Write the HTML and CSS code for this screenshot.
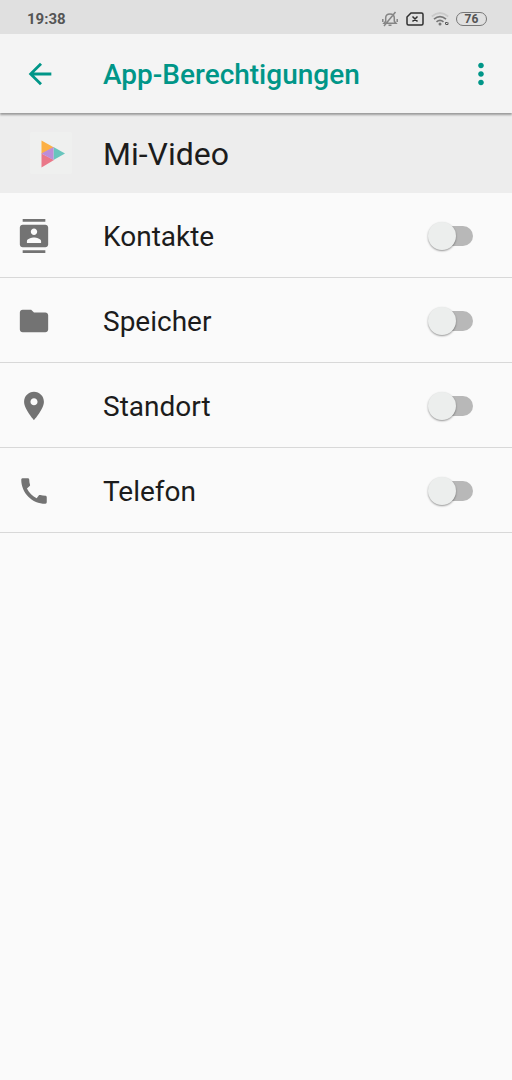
FILE: index.html
```html
<!DOCTYPE html>
<html lang="de">
<head>
  <meta charset="UTF-8">
  <meta name="viewport" content="width=device-width, initial-scale=1.0">
  <title>App-Berechtigungen</title>
  <link rel="stylesheet" href="styles.css">
</head>
<body>
  <!-- Status bar -->
  <div class="status-bar">
    <span class="time">19:38</span>
    <div class="status-icons">
      <svg width="18" height="16" viewBox="0 0 18 16" fill="none" stroke="#858585" stroke-width="1.5">
        <path d="M3 12.200l1.700-2V7c0-2.500 1.800-4 4.300-4s4.300 1.500 4.300 4v3.200l1.700 2zM7.500 14.200h3M14.500 1L3 15M1.800 8v3M16.200 8v3" />
      </svg>
      <svg width="18" height="14" viewBox="0 0 18 14" fill="none" stroke="#2f2f2f" stroke-width="1.5">
        <path d="M5 1h10.500q1.500 0 1.500 1.500v9q0 1.500-1.500 1.500h-13Q1 13 1 11.500V5zM6.500 4.500l5 5M11.500 4.500l-5 5" />
      </svg>
      <svg width="18" height="14" viewBox="0 0 18 14" fill="none" stroke-width="1.7">
        <path stroke="#cacaca" d="M.8 4.500Q9-2.500 17.200 4.500" />
        <path stroke="#777" d="M3 7.200Q9 2 15 7.200M5.500 9.800Q9 7 12.500 9.800" />
        <circle cx="9" cy="12" r="1.500" fill="#777" />
        <path stroke="#555" stroke-width="1" d="M14.500 12.500v-2h2M17 10.500v2h-2" />
      </svg>
      <span class="battery">76</span>
    </div>
  </div>

  <!-- Toolbar -->
  <header class="toolbar">
    <button class="icon-button" type="button" aria-label="Zurück">
      <svg viewBox="0 0 24 24"><path d="M20 11H7.830l5.590-5.590L12 4l-8 8 8 8 1.410-1.410L7.830 13H20v-2z" /></svg>
    </button>
    <h1>App-Berechtigungen</h1>
    <button class="icon-button" type="button" aria-label="Mehr">
      <svg viewBox="0 0 24 24"><path d="M12 8c1.100 0 2-.9 2-2s-.9-2-2-2-2 .9-2 2 .9 2 2 2zm0 2c-1.100 0-2 .9-2 2s.9 2 2 2 2-.9 2-2-.9-2-2-2zm0 6c-1.100 0-2 .9-2 2s.9 2 2 2 2-.9 2-2-.9-2-2-2z" /></svg>
    </button>
  </header>

  <main>
    <!-- App name -->
    <div class="app">
      <svg class="app-logo" viewBox="0 0 42 42">
        <path fill="#fcb045" d="M11.500 8.500L24 15.500 11.500 22z" />
        <path fill="#68c5bd" d="M23.500 15L35 21.500 23.500 28z" />
        <path fill="#ea7889" d="M11.500 21.500L24 28 11.500 35.500z" />
        <path fill="#bd8dd8" d="M23.500 15v13l-12-6.500z" />
      </svg>
      <h2>Mi-Video</h2>
    </div>

    <!-- Permissions -->
    <ul class="permissions">
      <li>
        <svg class="permission-icon" viewBox="0 0 24 24"><path d="M20 0H4v2h16V0zM4 24h16v-2H4v2zM20 4H4c-1.100 0-2 .9-2 2v12c0 1.100.9 2 2 2h16c1.100 0 2-.9 2-2V6c0-1.100-.9-2-2-2zm-8 2.750c1.240 0 2.250 1.010 2.250 2.250s-1.010 2.250-2.250 2.250S9.750 10.240 9.750 9 10.760 6.750 12 6.750zM17 17H7v-1.500c0-1.670 3.330-2.500 5-2.500s5 .83 5 2.500V17z" /></svg>
        <label for="contacts">Kontakte</label>
        <input type="checkbox" role="switch" id="contacts" class="switch">
      </li>
      <li>
        <svg class="permission-icon" viewBox="0 0 24 24"><path d="M10 4H4c-1.100 0-1.990.9-1.990 2L2 18c0 1.100.9 2 2 2h16c1.100 0 2-.9 2-2V8c0-1.100-.9-2-2-2h-8l-2-2z" /></svg>
        <label for="storage">Speicher</label>
        <input type="checkbox" role="switch" id="storage" class="switch">
      </li>
      <li>
        <svg class="permission-icon" viewBox="0 0 24 24"><path d="M12 2C8.130 2 5 5.130 5 9c0 5.250 7 13 7 13s7-7.750 7-13c0-3.870-3.130-7-7-7zm0 9.500c-1.380 0-2.500-1.120-2.500-2.500s1.120-2.500 2.500-2.500 2.500 1.120 2.500 2.500-1.120 2.500-2.500 2.500z" /></svg>
        <label for="location">Standort</label>
        <input type="checkbox" role="switch" id="location" class="switch">
      </li>
      <li>
        <svg class="permission-icon" viewBox="0 0 24 24"><path d="M20.010 15.380c-1.230 0-2.420-.2-3.530-.56-.35-.12-.74-.03-1.010.24l-1.570 1.970c-2.830-1.350-5.480-3.900-6.890-6.830l1.950-1.660c.27-.28.35-.67.24-1.020-.37-1.110-.56-2.300-.56-3.530 0-.54-.45-.99-.99-.99H4.190C3.650 3 3 3.240 3 3.990 3 13.280 10.730 21 20.010 21c.71 0 .99-.63.99-1.180v-3.450c0-.54-.45-.99-.99-.99z" /></svg>
        <label for="phone">Telefon</label>
        <input type="checkbox" role="switch" id="phone" class="switch">
      </li>
    </ul>
  </main>
</body>
</html>
```
FILE: styles.css
```css
* {
  margin: 0;
  padding: 0;
  box-sizing: border-box;
}

body {
  font-family: Roboto, sans-serif;
  background-color: #fafafa;
  color: #1c1c1c;
}

svg {
  display: block;
  flex: none;
}

/* Status bar */
.status-bar {
  display: flex;
  align-items: center;
  justify-content: space-between;
  height: 34px;
  padding: 3px 25px 0 27px;
  background-color: #e0e0e0;
}

.time {
  font-size: 15px;
  font-weight: 700;
  color: #555;
}

.status-icons {
  display: flex;
  align-items: center;
  gap: 7px;
}

.battery {
  width: 31px;
  height: 14px;
  border: 1px solid #777;
  border-radius: 7px;
  font-size: 12px;
  font-weight: 700;
  line-height: 13px;
  text-align: center;
  color: #555;
}

/* Toolbar */
.toolbar {
  position: relative;
  display: flex;
  align-items: center;
  height: 79px;
  padding: 0 14px 0 23px;
  background-color: #f4f4f4;
  box-shadow: 0 2px 2px rgba(0, 0, 0, 0.35);
}

.toolbar h1 {
  flex: 1;
  margin-left: 46px;
  padding-top: 2px;
  font-size: 28px;
  font-weight: 500;
  color: #009688;
}

.icon-button {
  width: 34px;
  height: 34px;
  border: none;
  background: none;
  cursor: pointer;
}

.icon-button svg {
  width: 34px;
  height: 34px;
  fill: #009688;
}

/* App name */
.app {
  display: flex;
  align-items: center;
  height: 80px;
  padding: 0 30px;
  background-color: #ededed;
}

.app-logo {
  width: 42px;
  height: 42px;
  margin-right: 31px;
  border-radius: 2px;
  background-color: #eff0ef;
}

.app h2 {
  padding-top: 2px;
  font-size: 32px;
  font-weight: 400;
}

/* Permissions */
.permissions {
  list-style: none;
}

.permissions li {
  display: flex;
  align-items: center;
  height: 85px;
  padding: 1px 39px 0 17px;
  border-bottom: 1px solid #d8d8d8;
}

.permission-icon {
  width: 34px;
  height: 34px;
  fill: #737373;
}

.permissions label {
  flex: 1;
  margin-left: 52px;
  padding-top: 2px;
  font-size: 28px;
}

.switch {
  position: relative;
  width: 40px;
  height: 20px;
  border-radius: 10px;
  background-color: #b8b8b8;
  appearance: none;
  cursor: pointer;
}

.switch::before {
  content: "";
  position: absolute;
  top: -4px;
  left: -5px;
  width: 28px;
  height: 28px;
  border-radius: 50%;
  background-color: #eceeed;
  box-shadow: 0 1px 2px rgba(0, 0, 0, 0.4);
}

.switch:checked::before {
  left: 17px;
  background-color: #009688;
}
```
